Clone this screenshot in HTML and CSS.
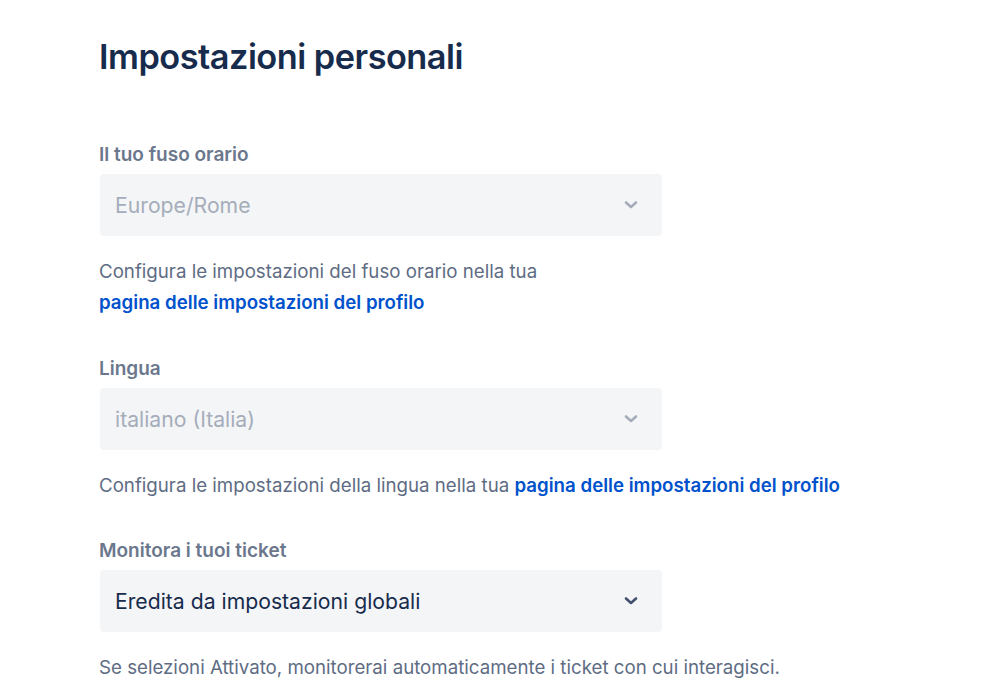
FILE: index.html
```html
<!DOCTYPE html>
<html lang="it">
<head>
<meta charset="utf-8">
<title>Impostazioni personali</title>
<link rel="stylesheet" href="styles.css">
</head>
<body>
<main class="page">
  <h1 class="title">Impostazioni personali</h1>

  <section class="field first">
    <div class="label">Il tuo fuso orario</div>
    <div class="select disabled">
      <span class="value">Europe/Rome</span>
      <svg class="chev" viewBox="0 0 14 8" width="14" height="8"><path d="M2 1.5 L7 6 L12 1.5" fill="none" stroke="currentColor" stroke-width="2.6" stroke-linecap="round" stroke-linejoin="round"/></svg>
    </div>
    <p class="help narrow">Configura le impostazioni del fuso orario nella tua <a href="#">pagina delle impostazioni del profilo</a></p>
  </section>

  <section class="field">
    <div class="label">Lingua</div>
    <div class="select disabled">
      <span class="value">italiano (Italia)</span>
      <svg class="chev" viewBox="0 0 14 8" width="14" height="8"><path d="M2 1.5 L7 6 L12 1.5" fill="none" stroke="currentColor" stroke-width="2.6" stroke-linecap="round" stroke-linejoin="round"/></svg>
    </div>
    <p class="help">Configura le impostazioni della lingua nella tua <a href="#">pagina delle impostazioni del profilo</a></p>
  </section>

  <section class="field">
    <div class="label">Monitora i tuoi ticket</div>
    <div class="select">
      <span class="value">Eredita da impostazioni globali</span>
      <svg class="chev" viewBox="0 0 14 8" width="14" height="8"><path d="M2 1.5 L7 6 L12 1.5" fill="none" stroke="currentColor" stroke-width="2.6" stroke-linecap="round" stroke-linejoin="round"/></svg>
    </div>
    <p class="help">Se selezioni Attivato, monitorerai automaticamente i ticket con cui interagisci.</p>
  </section>
</main>
</body>
</html>
```

FILE: styles.css
```css
html, body {
  margin: 0;
  padding: 0;
  background: #ffffff;
}

body {
  font-family: Inter, "Noto Sans", "Liberation Sans", sans-serif;
  color: #172b4d;
}

.page {
  padding: 31px 0 0 99px;
}

.title {
  margin: 0;
  font-size: 34.3px;
  font-weight: 600;
  line-height: 52px;
  color: #172b4d;
  letter-spacing: -0.5px;
}

.field {
  display: flex;
  flex-direction: column;
}

.field.first {
  margin-top: 60px;
}

.field + .field {
  margin-top: 38.5px;
}

.label {
  font-size: 19px;
  font-weight: 600;
  line-height: 24px;
  color: #6b778c;
  margin-bottom: 7px;
}

.select {
  width: 562px;
  height: 62px;
  box-sizing: border-box;
  margin-left: 1px;
  padding: 0 24px 0 15px;
  background: #f4f5f7;
  border-radius: 4px;
  display: flex;
  align-items: center;
  justify-content: space-between;
  color: #172b4d;
}

.select .value {
  font-size: 21.2px;
  line-height: 24px;
}

.select .chev {
  color: #42526e;
}

.select.disabled .value {
  color: #a5adba;
}

.select.disabled .chev {
  color: #a5adba;
}

.help {
  margin: 20px 0 0 0;
  font-size: 18.7px;
  line-height: 31px;
  color: #5e6c84;
}

.help.narrow {
  max-width: 563px;
}

.help a {
  color: #0052cc;
  font-weight: 600;
  text-decoration: none;
  white-space: nowrap;
}
```
